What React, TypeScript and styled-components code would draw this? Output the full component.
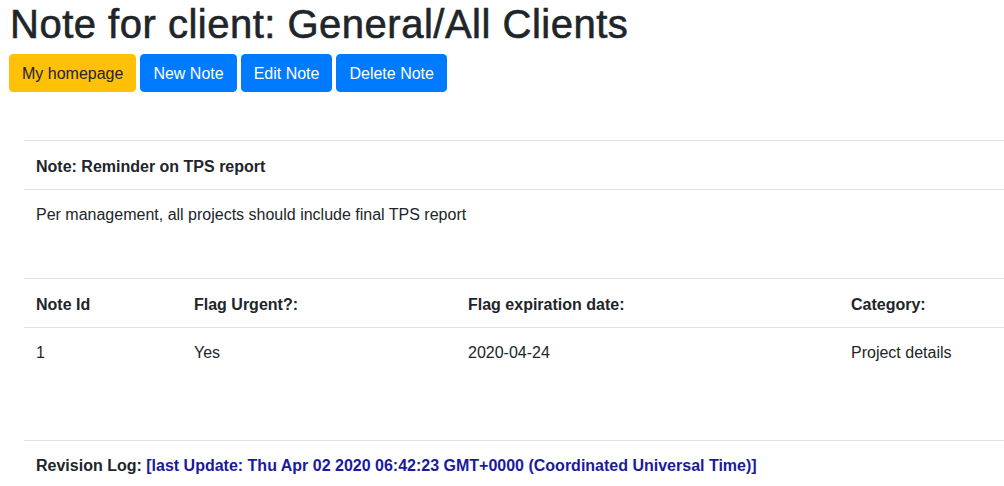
import React from 'react';
import styled, { createGlobalStyle } from 'styled-components';

const GlobalStyle = createGlobalStyle`
  body {
    margin: 0;
    background: #fff;
    color: #212529;
    font-family: "Liberation Sans", Arial, sans-serif;
    font-size: 16px;
    line-height: 1.5;
  }
`;

const Page = styled.div`
  padding: 0 9px;
  overflow: hidden;
`;

const Title = styled.h1`
  margin: 0 0 6px 1px;
  font-size: 40px;
  font-weight: 400;
  line-height: 48px;
  letter-spacing: 0.5px;
  -webkit-text-stroke: 0.6px #212529;
`;

const Toolbar = styled.div`
  display: flex;
  gap: 4px;
`;

const Button = styled.button<{ variant: 'warning' | 'primary' }>`
  font-family: inherit;
  font-size: 16px;
  line-height: 24px;
  padding: 7px 12px 5px;
  border-radius: 4px;
  border: 1px solid ${p => (p.variant === 'warning' ? '#ffc107' : '#007bff')};
  background: ${p => (p.variant === 'warning' ? '#ffc107' : '#007bff')};
  color: ${p => (p.variant === 'warning' ? '#212529' : '#fff')};
  cursor: pointer;
`;

const Section = styled.div<{ top: number }>`
  margin: ${p => p.top}px 0 0 15px;
  width: 1100px;
`;

const Table = styled.table`
  width: 100%;
  border-collapse: collapse;
  table-layout: fixed;
`;

const Th = styled.th<{ w?: number }>`
  width: ${p => (p.w ? `${p.w}px` : 'auto')};
  text-align: left;
  font-weight: 700;
  font-size: 16px;
  line-height: 24px;
  padding: 14px 12px 10px;
  border-top: 1px solid #dee2e6;
  border-bottom: 1px solid #dee2e6;
`;

const Td = styled.td`
  font-size: 16px;
  line-height: 24px;
  padding: 13px 12px 11px;
  vertical-align: top;
`;

const Log = styled.div`
  border-top: 1px solid #dee2e6;
  padding: 13px 12px 11px;
  font-size: 16px;
  line-height: 24px;
  font-weight: 700;
`;

const Stamp = styled.span`
  color: #1a1a9c;
`;

export default function App() {
  return (
    <Page>
      <GlobalStyle />
      <Title>Note for client: General/All Clients</Title>
      <Toolbar>
        <Button variant="warning">My homepage</Button>
        <Button variant="primary">New Note</Button>
        <Button variant="primary">Edit Note</Button>
        <Button variant="primary">Delete Note</Button>
      </Toolbar>

      <Section top={48}>
        <Table>
          <thead>
            <tr>
              <Th>Note: Reminder on TPS report</Th>
            </tr>
          </thead>
          <tbody>
            <tr>
              <Td>Per management, all projects should include final TPS report</Td>
            </tr>
          </tbody>
        </Table>
      </Section>

      <Section top={40}>
        <Table>
          <thead>
            <tr>
              <Th w={134}>Note Id</Th>
              <Th w={250}>Flag Urgent?:</Th>
              <Th w={359}>Flag expiration date:</Th>
              <Th>Category:</Th>
            </tr>
          </thead>
          <tbody>
            <tr>
              <Td>1</Td>
              <Td>Yes</Td>
              <Td>2020-04-24</Td>
              <Td>Project details</Td>
            </tr>
          </tbody>
        </Table>
      </Section>

      <Section top={64}>
        <Log>
          Revision Log: <Stamp>[last Update: Thu Apr 02 2020 06:42:23 GMT+0000 (Coordinated Universal Time)]</Stamp>
        </Log>
      </Section>
    </Page>
  );
}
